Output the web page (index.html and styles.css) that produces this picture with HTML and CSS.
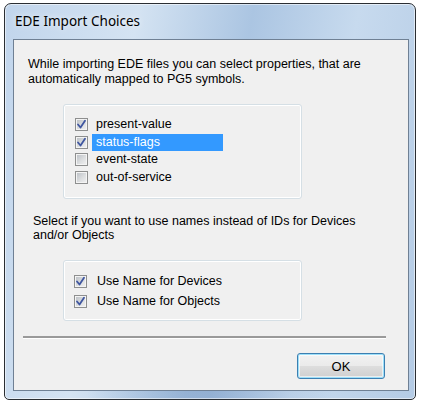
FILE: index.html
```
<!DOCTYPE html>
<html>
  <head>
    <meta charset="utf-8">
    <title>EDE Import Choices</title>
    <link rel="stylesheet" href="styles.css">
  </head>
  <body>
    <div class="window">
      <div class="titlebar">EDE Import Choices</div>
      <div class="client">
        <p class="intro">
          While importing EDE files you can select properties, that are<br>
          automatically mapped to PG5 symbols.
        </p>
        <div class="group group-props">
          <ul class="checklist">
            <li class="item">
              <span class="check checked"><svg width="13" height="13" viewBox="0 0 13 13"><path d="M3 6.5 L5.5 9.5 L10 2.8" /></svg></span>
              <span class="label">present-value</span>
            </li>
            <li class="item">
              <span class="check checked"><svg width="13" height="13" viewBox="0 0 13 13"><path d="M3 6.5 L5.5 9.5 L10 2.8" /></svg></span>
              <span class="label selected">status-flags</span>
            </li>
            <li class="item">
              <span class="check"></span>
              <span class="label">event-state</span>
            </li>
            <li class="item">
              <span class="check"></span>
              <span class="label">out-of-service</span>
            </li>
          </ul>
        </div>
        <p class="intro intro-names">
          Select if you want to use names instead of IDs for Devices<br>
          and/or Objects
        </p>
        <div class="group group-names">
          <label class="option">
            <span class="check checked"><svg width="13" height="13" viewBox="0 0 13 13"><path d="M3 6.5 L5.5 9.5 L10 2.8" /></svg></span>
            <span class="option-text">Use Name for Devices</span>
          </label>
          <label class="option">
            <span class="check checked"><svg width="13" height="13" viewBox="0 0 13 13"><path d="M3 6.5 L5.5 9.5 L10 2.8" /></svg></span>
            <span class="option-text">Use Name for Objects</span>
          </label>
        </div>
        <div class="separator"></div>
        <div class="buttons">
          <button class="btn" type="button">OK</button>
        </div>
      </div>
    </div>
  </body>
</html>
```
FILE: styles.css
```
body {
  margin: 0;
  background: #ffffff;
  font-family: "Liberation Sans", Arial, sans-serif;
}

.window {
  box-sizing: border-box;
  width: 412px;
  height: 397px;
  margin: 3px 0 0 4px;
  padding: 0 6px 8px 8px;
  border: 1px solid #2a2e33;
  border-radius: 7px 7px 5px 5px;
  background:
    linear-gradient(90deg, rgba(120, 150, 190, 0) 20%, rgba(110, 145, 190, 0.45) 50%, rgba(120, 150, 190, 0) 80%) bottom / 100% 10px no-repeat,
    linear-gradient(100deg, #c1d5ec 0%, #d4e3f2 28%, #abc5e2 52%, #c7daee 74%, #b4cbe5 100%);
  box-shadow: inset 0 0 0 1px rgba(255, 255, 255, 0.55);
}

.titlebar {
  height: 35px;
  padding-left: 2px;
  line-height: 35px;
  font-family: "Noto Sans", "Open Sans", sans-serif;
  font-size: 13.5px;
  color: #000000;
  text-shadow: 0 0 6px rgba(255, 255, 255, 0.9);
}

.client {
  box-sizing: border-box;
  width: 396px;
  height: 352px;
  border: 1px solid #6f8094;
  background: #f0f0f0;
  font-size: 12.5px;
  color: #000000;
  padding-top: 17px;
}

.intro {
  margin: 0 0 17px 14px;
  line-height: 15px;
}

.intro-names {
  margin: 15px 0 18px 19px;
  line-height: 14px;
}

.group {
  box-sizing: border-box;
  width: 239px;
  margin-left: 49px;
  border: 1px solid #d5dfe5;
  border-radius: 3px;
  box-shadow: inset 0 0 0 1px #ffffff;
}

.group-props {
  height: 95px;
  padding: 11px 0 0 11px;
}

.group-names {
  height: 61px;
  padding: 10px 0 0 10px;
}

.checklist {
  list-style: none;
  margin: 0;
  padding: 0;
}

.item {
  display: flex;
  align-items: center;
  height: 17.5px;
}

.check {
  box-sizing: border-box;
  display: inline-block;
  width: 13px;
  height: 13px;
  flex: none;
  border: 1px solid #8e8f8f;
  background: linear-gradient(135deg, #b8bdc3 0%, #dcdee0 55%, #f2f2f2 100%);
  box-shadow: inset 0 0 0 1px #f4f4f4;
  position: relative;
}

.check svg {
  position: absolute;
  left: -1px;
  top: -1px;
}

.check path {
  fill: none;
  stroke: #3f56a0;
  stroke-width: 1.8;
  stroke-linecap: round;
  stroke-linejoin: round;
}

.label {
  box-sizing: border-box;
  width: 131px;
  height: 17px;
  margin-left: 4px;
  padding-left: 4px;
  line-height: 17px;
}

.label.selected {
  background: #3399ff;
  color: #ffffff;
}

.option {
  display: flex;
  align-items: center;
  height: 20px;
}

.option-text {
  margin-left: 10px;
}

.separator {
  width: 363px;
  height: 0;
  margin: 15px 0 0 9px;
  border-top: 2px solid #9a9a9a;
  border-bottom: 1px solid #ffffff;
}

.buttons {
  display: flex;
  justify-content: flex-end;
  padding: 14px 23px 0 0;
}

.btn {
  box-sizing: border-box;
  width: 88px;
  height: 26px;
  border: 1px solid #3c7fb1;
  border-radius: 3px;
  background: linear-gradient(to bottom, #f2f2f2 0%, #ebebeb 48%, #dddddd 52%, #cfcfcf 100%);
  box-shadow: inset 0 0 0 1px #9ddff9, inset 0 0 0 2px rgba(255, 255, 255, 0.6);
  font-family: "Liberation Sans", Arial, sans-serif;
  font-size: 13px;
  color: #000000;
  padding: 0;
}
```
